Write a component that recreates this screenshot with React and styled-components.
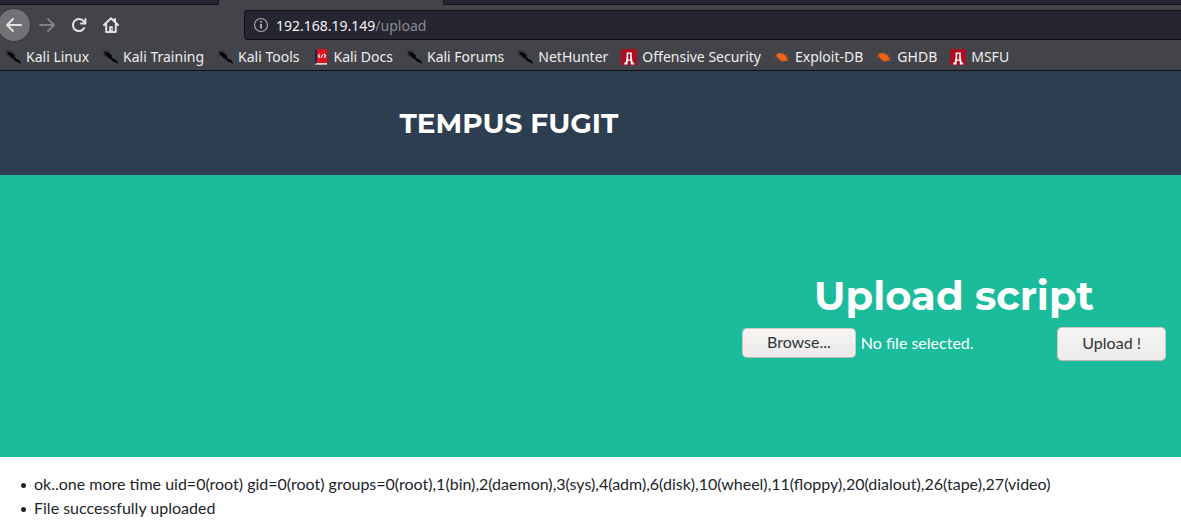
import React, { useRef, useState } from "react";
import styled, { createGlobalStyle } from "styled-components";

const GlobalStyle = createGlobalStyle`
  *, *::before, *::after { box-sizing: border-box; }
  body {
    margin: 0;
    background: #fff;
    color: #212529;
    font-family: Lato, "Liberation Sans", sans-serif;
    font-size: 16px;
    line-height: 24px;
  }
`;

const Chrome = styled.div`
  background: #42444a;
  border-bottom: 1px solid #0f1014;
  font-family: "Noto Sans", sans-serif;
  font-size: 14px;
  line-height: 20px;
  color: #eeeeec;
`;

const TabStrip = styled.div`
  display: flex;
  height: 5px;
`;

const TabGap = styled.div`
  flex: ${(p) => (p.$grow ? "1" : "0 0 218px")};
  background: #252631;
  border-bottom: 1px solid #101116;
`;

const ActiveTab = styled.div`
  flex: 0 0 226px;
  border: solid #191a20;
  border-width: 0 1px;
`;

const Toolbar = styled.nav`
  display: flex;
  align-items: center;
  height: 40px;
`;

const ToolButton = styled.button`
  display: grid;
  place-items: center;
  flex: none;
  width: 32px;
  height: 32px;
  padding: 0;
  border: 0;
  background: none;
  color: ${(p) => (p.disabled ? "#808186" : "#e2e2e0")};
`;

const BackButton = styled(ToolButton)`
  width: 34px;
  height: 34px;
  margin-left: -3px;
  border: 1px solid #36373c;
  border-radius: 50%;
  background: #717276;
`;

const AddressBar = styled.label`
  display: flex;
  flex: 1;
  align-items: center;
  gap: 7px;
  height: 30px;
  margin-left: 117px;
  padding-left: 8px;
  border: 1px solid #0f1014;
  border-right: 0;
  border-radius: 4px 0 0 4px;
  background: #252631;
  color: #a6a6aa;
`;

const Address = styled.span`
  display: grid;
  flex: 1;
  padding-top: 2px;

  > * { grid-area: 1 / 1; }
`;

const AddressText = styled.span`
  color: #8a8a90;
  pointer-events: none;

  b { font-weight: 400; color: #f4f4f5; }
`;

const AddressInput = styled.input`
  width: 100%;
  padding: 0;
  border: 0;
  outline: 0;
  background: none;
  color: transparent;
  font: inherit;
`;

const Bookmarks = styled.nav`
  display: flex;
  align-items: center;
  gap: 13px;
  height: 25px;
  padding: 0 0 2px 5px;
`;

const Bookmark = styled.a`
  display: flex;
  flex: none;
  align-items: center;
  gap: 5px;
  color: inherit;
  text-decoration: none;
`;

const Header = styled.header`
  padding: 32px 16px 32px calc(50% - 191px);
  background: #2c3e50;
`;

const Brand = styled.a`
  color: #fff;
  font-family: Montserrat, Inter, sans-serif;
  font-size: 28px;
  font-weight: 700;
  line-height: 40px;
  text-decoration: none;
`;

const Hero = styled.main`
  display: flex;
  justify-content: flex-end;
  padding: 97px 15px 96px;
  background: #1abc9c;
  color: #fff;
`;

const UploadPanel = styled.section`
  width: 424px;
`;

const Title = styled.h1`
  margin: 0 0 7px;
  font-family: Montserrat, Inter, sans-serif;
  font-size: 40px;
  font-weight: 700;
  line-height: 48px;
  text-align: center;
`;

const UploadForm = styled.form`
  display: flex;
  align-items: flex-start;
  justify-content: space-between;
`;

const FilePicker = styled.div`
  display: flex;
  align-items: center;
  gap: 5px;
  padding-top: 1px;
`;

const Button = styled.button`
  height: ${(p) => (p.$tall ? 34 : 30)}px;
  padding: 0 24px 2px;
  border: 1px solid #cdc7c2;
  border-bottom-color: #bfb8b1;
  border-radius: 5px;
  background: linear-gradient(#f6f5f4, #edebe9);
  color: #2e3436;
  font: inherit;
`;

const Messages = styled.ul`
  margin: 0;
  padding: 15px 0 0 21px;
  list-style: none;
`;

const Message = styled.li`
  display: flex;
  align-items: center;
  gap: 8px;

  &::before {
    content: "";
    flex: none;
    width: 5px;
    height: 5px;
    margin-top: 2px;
    border-radius: 50%;
    background: currentColor;
  }
`;

function BackIcon({ forward }) {
  return (
    <svg width="18" height="18" viewBox="0 0 18 18" fill="none" stroke="currentColor" strokeWidth="2" strokeLinecap="round" strokeLinejoin="round" aria-hidden="true">
      <path d={forward ? "M2 9H16M10 3L16 9L10 15" : "M16 9H2M8 3L2 9L8 15"} />
    </svg>
  );
}

function ReloadIcon() {
  return (
    <svg width="16" height="16" viewBox="0 0 16 16" fill="none" stroke="currentColor" strokeWidth="2" strokeLinecap="round" strokeLinejoin="round" aria-hidden="true">
      <path d="M13.2 11A6 6 0 1 1 12.6 4.2L14 5.6" />
      <path d="M14.4 2V6.4H10" />
    </svg>
  );
}

function HomeIcon() {
  return (
    <svg width="16" height="16" viewBox="0 0 16 16" fill="none" stroke="currentColor" strokeWidth="2" strokeLinecap="round" strokeLinejoin="round" aria-hidden="true">
      <path d="M1 8L8 1.3L15 8M3.2 7.5V15H12.8V7.5" />
      <path d="M6.2 15V9.2H9.8V15Z" fill="currentColor" stroke="none" />
      <path d="M12 2V5" />
      <circle cx="8.7" cy="12" r="0.7" fill="#42444a" stroke="none" />
    </svg>
  );
}

function InfoIcon() {
  return (
    <svg width="16" height="16" viewBox="0 0 16 16" fill="none" stroke="currentColor" aria-hidden="true">
      <circle cx="8" cy="8" r="6.5" strokeWidth="1.2" />
      <path d="M8 7V11.6" strokeWidth="2" />
      <circle cx="8" cy="4.8" r="1.1" fill="currentColor" stroke="none" />
    </svg>
  );
}

function KaliIcon() {
  return (
    <svg width="16" height="16" viewBox="0 0 16 16" aria-hidden="true">
      <path d="M1 1.2L4.2 3L6.6 3.6L8.6 5.2L9.6 5.6L9.8 8.2L11.6 10L14 11L15.6 13L15.8 15.2L13.6 13.2L11 12.6L8.6 10L6.4 9L4.4 6.6L1.6 5.4L3.8 5.2L1 3.2L3.4 3.6Z" fill="#050506" />
      <path d="M4.4 1L7.8 2.6M1.4 5.8L4.6 7.2" fill="none" stroke="#1b1b1e" strokeWidth=".7" />
    </svg>
  );
}

function DocsIcon() {
  return (
    <svg width="16" height="16" viewBox="0 0 16 16" aria-hidden="true">
      <path d="M3 1L5 0V14L3 15Z" fill="#182854" />
      <path d="M5 0H15V14H5Z" fill="#e31318" />
      <path d="M3 15L5 14H15V15.7H3Z" fill="#d5d4d2" />
      <path d="M8 5L6.3 7L8.2 8.8M11.8 5L13.7 6.8L12 8.8M10.7 5.5L9.3 8.4" fill="none" stroke="#fff" strokeWidth="1.1" />
    </svg>
  );
}

function OffsecIcon() {
  return (
    <svg width="16" height="16" viewBox="0 0 16 16" aria-hidden="true">
      <path d="M0 0H16V16H0Z" fill="#ae0c20" />
      <path d="M5.6 3.4H10.8V8L11.6 13L13.2 14V15.4H9.8V12.6L9 11.8H7.4L6.6 12.6V15.4H3.2V14L4.8 13L5.6 8Z" fill="#fff" />
      <path d="M7.2 4.8H9.2V10.6H7.2Z" fill="#ae0c20" />
    </svg>
  );
}

function BugIcon() {
  return (
    <svg width="16" height="16" viewBox="0 0 16 16" aria-hidden="true">
      <path d="M2.3 6.3C3.2 3.9 6 3.4 8 4.7C10.8 5 13.2 7.5 13.2 10.3L14.6 12L12.2 11.6C9 13.1 6.2 12 4.7 9.3C3.5 9.1 2.5 8 2.3 6.3Z" fill="#ef6518" />
      <path d="M1 4.6L4 6M.8 8.2L4 7.7M8 5.2L9.5 3.4M10.6 6.4L13.3 5.2M12 8.7L15 8.5M5.5 9.8L3.8 11.9M7.5 11L7.3 13" stroke="#b95726" strokeWidth=".8" fill="none" />
    </svg>
  );
}

const bookmarks = [
  ["Kali Linux", KaliIcon],
  ["Kali Training", KaliIcon],
  ["Kali Tools", KaliIcon],
  ["Kali Docs", DocsIcon],
  ["Kali Forums", KaliIcon],
  ["NetHunter", KaliIcon],
  ["Offensive Security", OffsecIcon],
  ["Exploit-DB", BugIcon],
  ["GHDB", BugIcon],
  ["MSFU", OffsecIcon],
];

function BrowserChrome() {
  return (
    <Chrome>
      <TabStrip>
        <TabGap />
        <ActiveTab />
        <TabGap $grow />
      </TabStrip>
      <Toolbar>
        <BackButton aria-label="Back"><BackIcon /></BackButton>
        <ToolButton aria-label="Forward" disabled><BackIcon forward /></ToolButton>
        <ToolButton aria-label="Reload"><ReloadIcon /></ToolButton>
        <ToolButton aria-label="Home"><HomeIcon /></ToolButton>
        <AddressBar>
          <InfoIcon />
          <Address>
            <AddressText><b>192.168.19.149</b>/upload</AddressText>
            <AddressInput aria-label="Address" />
          </Address>
        </AddressBar>
      </Toolbar>
      <Bookmarks aria-label="Bookmarks">
        {bookmarks.map(([name, Icon]) => (
          <Bookmark href="#" key={name}><Icon />{name}</Bookmark>
        ))}
      </Bookmarks>
    </Chrome>
  );
}

export default function App() {
  const fileInput = useRef(null);
  const [fileName, setFileName] = useState("No file selected.");
  return (
    <>
      <GlobalStyle />
      <BrowserChrome />
      <Header><Brand href="#">TEMPUS FUGIT</Brand></Header>
      <Hero>
        <UploadPanel>
          <Title>Upload script</Title>
          <UploadForm onSubmit={(e) => e.preventDefault()}>
            <FilePicker>
              <input
                ref={fileInput}
                type="file"
                hidden
                aria-label="File"
                onChange={(e) => setFileName(e.target.files[0]?.name ?? "No file selected.")}
              />
              <Button type="button" onClick={() => fileInput.current.click()}>Browse...</Button>
              <span>{fileName}</span>
            </FilePicker>
            <Button type="submit" $tall>Upload !</Button>
          </UploadForm>
        </UploadPanel>
      </Hero>
      <Messages>
        <Message>ok..one more time uid=0(root) gid=0(root) groups=0(root),1(bin),2(daemon),3(sys),4(adm),6(disk),10(wheel),11(floppy),20(dialout),26(tape),27(video)</Message>
        <Message>File successfully uploaded</Message>
      </Messages>
    </>
  );
}
